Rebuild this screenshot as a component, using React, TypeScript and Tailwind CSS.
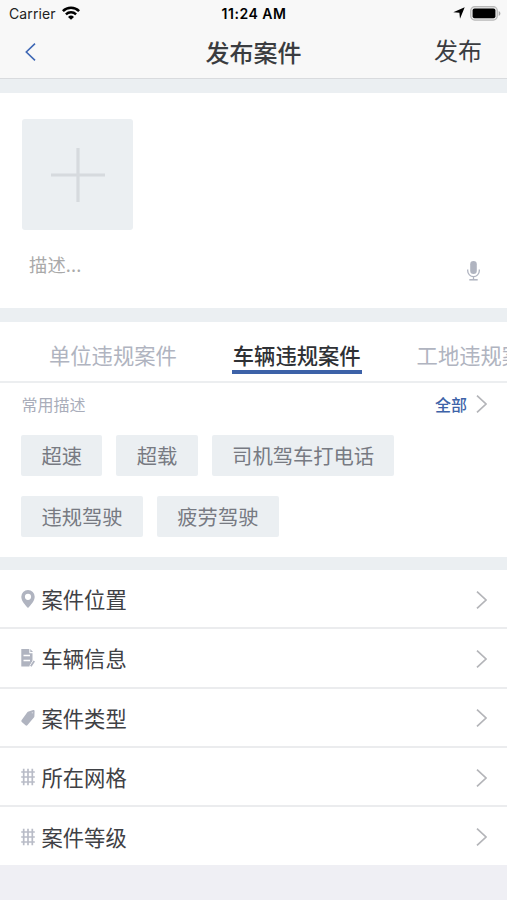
import { useState, type ReactNode } from "react";
import clsx from "clsx";

const TABS = ["单位违规案件", "车辆违规案件", "工地违规案件"];

const PHRASES = ["超速", "超载", "司机驾车打电话", "违规驾驶", "疲劳驾驶"];

const ROWS: { label: string; icon: ReactNode }[] = [
  { label: "案件位置", icon: <PinIcon /> },
  { label: "车辆信息", icon: <FormIcon /> },
  { label: "案件类型", icon: <TagIcon /> },
  { label: "所在网格", icon: <GridIcon /> },
  { label: "案件等级", icon: <GridIcon /> },
];

function PinIcon() {
  return (
    <svg className="mt-px h-[18px] w-[14px]" viewBox="0 0 14 18" fill="#b0b4c0">
      <path
        fillRule="evenodd"
        d="M7 0a6.7 6.7 0 0 0-6.7 6.800C.3 11 4.400 15.400 7 18c2.600-2.600 6.700-7 6.700-11.200A6.700 6.700 0 0 0 7 0Zm0 3.700a3.100 3.100 0 1 1 0 6.200 3.100 3.100 0 0 1 0-6.200Z"
      />
    </svg>
  );
}

function FormIcon() {
  return (
    <svg className="mt-px h-[18px] w-[14px]" viewBox="0 0 14 18">
      <path d="M.3 0h8v4.200h3.200V12L8.300 17.500H.3Z" fill="#b0b4c0" />
      <path d="M9.300 0 12 3H9.300Z" fill="#b0b4c0" />
      <path d="M2.500 6.500h6.500M2.500 11.500h6.500" stroke="#fff" strokeWidth="1.700" />
      <path d="m14 11.500-4 6" stroke="#fff" strokeWidth="3.600" />
      <path d="m13.300 12-3.500 5.300" stroke="#b0b4c0" strokeWidth="1.800" />
    </svg>
  );
}

function TagIcon() {
  return (
    <svg className="mt-px h-[18px] w-[14px]" viewBox="0 0 14 18">
      <path
        d="M7.600 2.400 12.200 1.100c.8-.2 1.400.3 1.400 1.100l-.2 5c0 .5-.2.900-.5 1.300l-6.600 7.700c-.5.600-1.200.600-1.800.100L.8 12.900c-.6-.5-.6-1.200-.1-1.800l5.800-8c.3-.4.600-.6 1.100-.7Z"
        fill="#b0b4c0"
      />
      <circle cx="11.400" cy="3.800" r=".8" fill="#d5d7de" />
    </svg>
  );
}

function GridIcon() {
  return (
    <svg
      className="mt-px h-[18px] w-[14px]"
      viewBox="0 0 14 18"
      fill="none"
      stroke="#b9bcc7"
      strokeWidth="1.700"
    >
      <path d="M2.700.8v16.400M7 .8v16.400M11.300.8v16.400M.2 4h13.600M.2 9h13.600M.2 14h13.600" />
    </svg>
  );
}

function Chevron({ className }: { className?: string }) {
  return (
    <svg
      className={clsx("h-[18px] w-[11px]", className)}
      viewBox="0 0 11 18"
      fill="none"
      stroke="#b4b5b9"
      strokeWidth="1.700"
    >
      <path d="m1 .6 9 8.400-9 8.400" />
    </svg>
  );
}

function StatusBar() {
  return (
    <div className="grid h-[27px] grid-cols-3 items-center pl-[9px] pr-[6px] text-black">
      <div className="flex items-center gap-[6px]">
        <span className="font-['Inter'] text-[14px] leading-none tracking-[0.1px] text-[#222]">
          Carrier
        </span>
        <svg className="-mt-[2px] h-[14px] w-[18px]" viewBox="0 0 18 14" fill="none" stroke="#000">
          <path d="M.9 5.100a11.600 11.600 0 0 1 16.200 0" strokeWidth="2.600" />
          <path d="M3.900 8.400a7.300 7.300 0 0 1 10.200 0" strokeWidth="2.400" />
          <path d="M9 13.800 6 10.900a4.300 4.300 0 0 1 6 0Z" fill="#000" stroke="none" />
        </svg>
      </div>
      <div className="-ml-[2px] text-center font-['Inter'] text-[14px] font-semibold leading-none tracking-[0.5px]">
        11:24 AM
      </div>
      <div className="flex items-center justify-end gap-[5px]">
        <svg className="-mt-px h-3 w-3" viewBox="0 0 12 12">
          <path d="M11.700.3 7 11.700 6.400 5.800.3 5.200Z" />
        </svg>
        <svg className="-mt-px h-[15px] w-[31px]" viewBox="0 0 31 15">
          <rect x=".7" y=".7" width="26.600" height="13.400" rx="4" fill="#e6e6e6" stroke="#b8b8b8" strokeWidth="1.200" />
          <rect x="2.600" y="2.600" width="22.800" height="9.600" rx="2" />
          <path d="M28.700 5v5c1-.4 1.700-1.300 1.700-2.500S29.700 5.400 28.700 5Z" fill="#a8a8a8" />
        </svg>
      </div>
    </div>
  );
}

function NavBar() {
  return (
    <div className="grid h-[49px] grid-cols-3 items-center px-[25px] text-[#3a3c40]">
      <button className="justify-self-start pt-px">
        <svg className="h-[18px] w-[11px]" viewBox="0 0 11 18" fill="none" stroke="#3f68b5" strokeWidth="1.600">
          <path d="M10 .6 1.300 9l8.700 8.400" />
        </svg>
      </button>
      <h1 className="justify-self-center whitespace-nowrap text-[24px] font-medium leading-none">
        发布案件
      </h1>
      <button className="-mt-[3px] justify-self-end text-[24px] leading-none">发布</button>
    </div>
  );
}

export default function App() {
  const [tab, setTab] = useState(1);

  return (
    <div className="h-[900px] w-[507px] overflow-hidden bg-[#efeff4] font-['Noto_Sans_CJK_SC',sans-serif]">
      <header className="h-[79px] border-b border-[#d9dbde] bg-[#f8f8f8]">
        <StatusBar />
        <NavBar />
      </header>
      <div className="h-[14px] bg-[#ebeff2]" />

      <section className="h-[215px] bg-white px-[22px] pt-[26px]">
        <button className="flex size-[111px] items-center justify-center rounded-[3px] bg-[#ebeff2]">
          <svg className="size-[54px]" viewBox="0 0 54 54" stroke="#d6dade" strokeWidth="3.200">
            <path d="M27 0v54M0 27h54" />
          </svg>
        </button>
        <div className="mt-[20px] flex h-[28px] items-center justify-between pl-[7px] pr-[5px]">
          <span className="text-[18.300px] leading-none tracking-[0.150px] text-[#a9a9a9]">描述...</span>
          <svg className="mt-[13px] h-[20px] w-[13px]" viewBox="0 0 13 20" fill="none" stroke="#b0b4c0">
            <rect x="3.200" y="0" width="6.600" height="13" rx="3.300" fill="#b0b4c0" stroke="none" />
            <path d="M.7 8.500v1.300a5.800 5.800 0 0 0 11.600 0V8.500M6.500 15.500v3" strokeWidth="1.300" />
            <path d="M2.300 18.800h8.400" strokeWidth="1.500" />
          </svg>
        </div>
      </section>
      <div className="h-[14px] bg-[#ebeff2]" />

      <section className="h-[235px] bg-white">
        <nav className="flex h-[61px] gap-[54px] overflow-hidden border-b-2 border-[#eceef0] pl-[48px] pt-[20px]">
          {TABS.map((t, i) => (
            <button
              key={t}
              onClick={() => setTab(i)}
              className={clsx(
                "h-[32px] shrink-0 whitespace-nowrap border-b-4 px-px pb-[3px] text-[21.300px] leading-[25px]",
                i === tab
                  ? "border-[#3d62a8] font-medium text-[#2f3135]"
                  : "border-transparent text-[#b0b4c0]",
              )}
            >
              {t}
            </button>
          ))}
        </nav>
        <div className="flex h-[42px] items-center justify-between pl-[21.500px] pr-[20px] text-[16px]">
          <span className="text-[#a9adba]">常用描述</span>
          <button className="flex items-center gap-[9px] font-medium text-[#3d62a8]">
            全部
            <Chevron />
          </button>
        </div>
        <div className="mt-[10px] flex flex-wrap gap-x-[14px] gap-y-[20px] pl-[21px] pr-[80px]">
          {PHRASES.map((p) => (
            <span
              key={p}
              className="flex h-[41px] items-center rounded-[2px] bg-[#ebeff2] px-[20.400px] text-[20.300px] leading-none text-[#777a82]"
            >
              {p}
            </span>
          ))}
        </div>
      </section>
      <div className="h-[13px] bg-[#ebeff2]" />

      <ul className="bg-white">
        {ROWS.map((r, i) => (
          <li
            key={r.label}
            className={clsx(
              "flex items-center pl-[21px] pr-[20px]",
              i < ROWS.length - 1 ? "h-[59.300px] border-b-2 border-[#ebecee]" : "h-[58px]",
            )}
          >
            {r.icon}
            <span className="ml-[6.500px] flex-1 text-[21.300px] leading-none text-[#3f4145]">{r.label}</span>
            <Chevron className="mt-[2px]" />
          </li>
        ))}
      </ul>
    </div>
  );
}
